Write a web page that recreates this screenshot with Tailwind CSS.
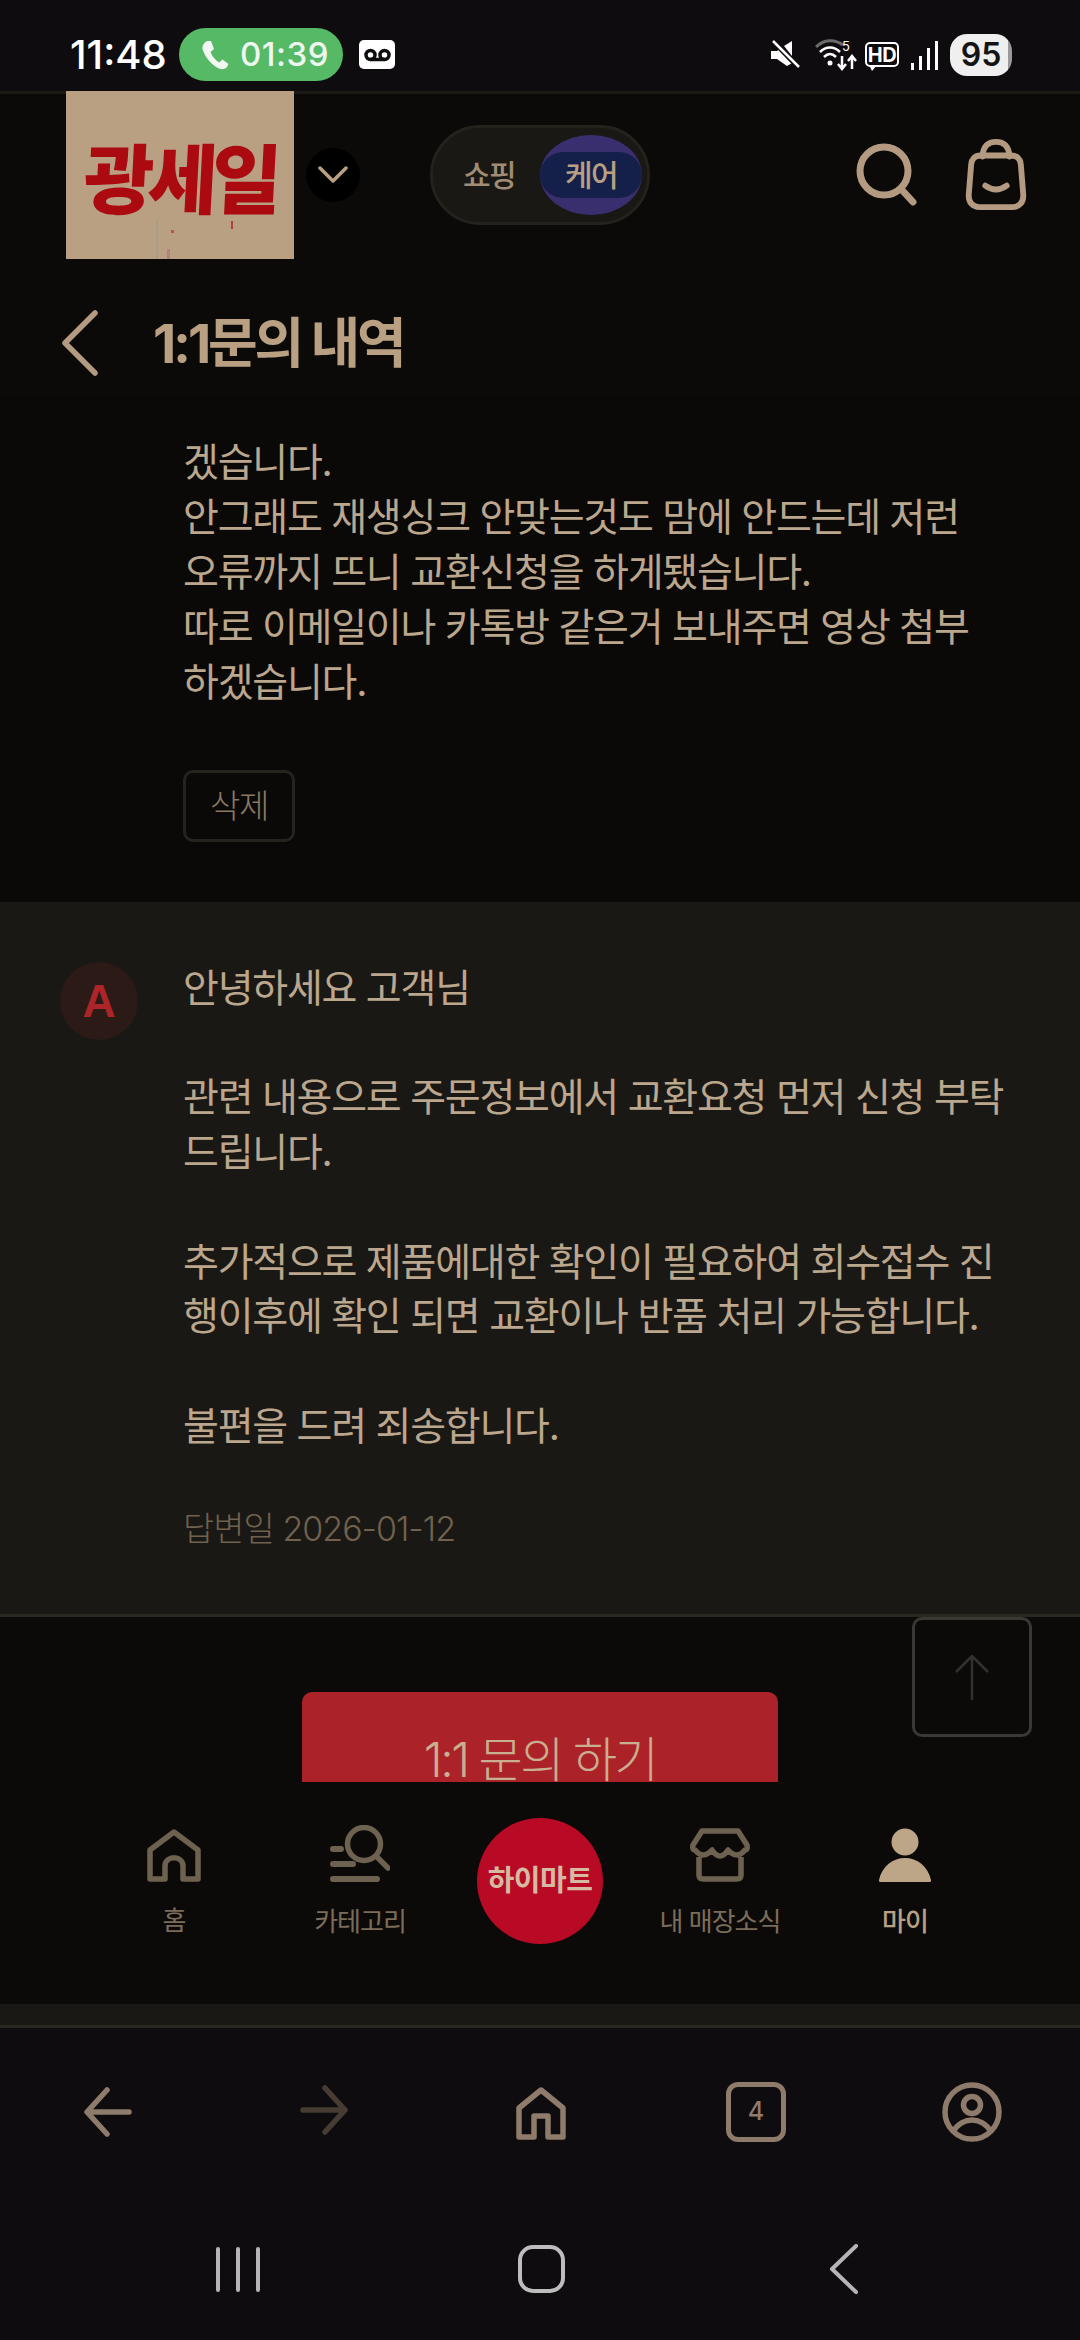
<!DOCTYPE html>
<html lang="ko">
<head>
  <meta charset="utf-8"/>
  <meta name="viewport" content="width=device-width, initial-scale=1"/>
  <title>1:1문의 내역</title>
  <script src="https://cdn.jsdelivr.net/npm/@tailwindcss/browser@4"></script>
</head>
<body class="bg-[#0c0a08] font-['Inter','Noto_Sans_CJK_KR',sans-serif] text-[#bba68e]">
  <div class="relative w-[1080px] h-[2340px] overflow-hidden flex flex-col">

    <!-- Status bar -->
    <div class="h-[94px] shrink-0 bg-[#0e0c0e] border-b-[3px] border-[#1c1a15] flex items-start justify-between pl-[70px] pr-[68px] pt-[28px]">
      <div class="flex items-center h-[53px]">
        <span class="text-[40px] font-medium text-white w-[109px]">11:48</span>
        <div class="w-[164px] h-[53px] rounded-full bg-[#55b966] flex items-center pl-[22px] gap-[11px]">
          <svg width="28" height="30" viewBox="0 0 28 30" fill="#f3f8f3"><path d="M6 1 10 1 13 9 9.500 12C11 16 14 20 18 22.500L21.500 19.500 27.500 24 26 27C24 29.500 20 30 16 27.500 9 23.500 3 15 1.500 9 1 6 3 2.500 6 1Z"/></svg>
          <span class="text-[33px] font-medium text-[#eef7ef] tracking-[0.5px]">01:39</span>
        </div>
        <div class="ml-[16px] w-[36px] h-[29px] rounded-[5px] bg-white flex items-center justify-center">
          <svg width="27" height="14" viewBox="0 0 27 14" fill="none" stroke="#0e0c0e" stroke-width="3.500"><circle cx="6.500" cy="7" r="4.500"/><circle cx="20.500" cy="7" r="4.500"/><path d="M6.500 11.500h14"/></svg>
        </div>
      </div>
      <div class="flex items-center h-[53px]">
        <svg width="30" height="30" viewBox="0 0 30 30" fill="white" class="mr-[15px]"><path d="M1 11h6l4-3 14 14-1 0 0 0L17 26 7 19H1Z"/><path d="M14 6 22 1v15Z"/><path d="M3 1 29 28" stroke="#0e0c0e" stroke-width="5"/><path d="M3 1 29 27" stroke="white" stroke-width="2.500"/></svg>
        <svg width="42" height="32" viewBox="0 0 42 32" fill="none" class="mr-[8px]"><path d="M1 8C9 0 20 0 28 6" stroke="#6b6b6b" stroke-width="3"/><path d="M5 13C11 7 19 7 25 13" stroke="white" stroke-width="2.500"/><path d="M9 18C13 14 17 14 21 18" stroke="white" stroke-width="2.500"/><circle cx="15" cy="24" r="2.500" fill="white"/><path d="M27 17v12M23 25l4 5 4-5M37 30V18M33 22l4-5 4 5" stroke="white" stroke-width="2.500"/><text x="27" y="12" font-size="13" fill="white" font-family="Inter">5</text></svg>
        <div class="relative w-[34px] h-[25px] border-[2px] border-white rounded-[5px] flex items-center justify-center text-[20px] leading-none font-bold tracking-[-0.5px] text-white mr-[12px]">HD<span class="absolute left-[2px] -bottom-[6px] w-0 h-0 border-l-[3px] border-r-[5px] border-t-[6px] border-l-transparent border-r-transparent border-t-white"></span></div>
        <div class="flex items-end gap-[5px] h-[30px] mr-[12px]">
          <div class="w-[3px] h-[7px] bg-white"></div>
          <div class="w-[3px] h-[14px] bg-white"></div>
          <div class="w-[3px] h-[22px] bg-white"></div>
          <div class="w-[3px] h-[29px] bg-white"></div>
        </div>
        <div class="w-[62px] h-[42px] rounded-[17px] bg-[linear-gradient(90deg,#efefef_93%,#9a9a9a_93%)] flex items-center justify-center text-[32px] font-semibold text-[#141414]">95</div>
      </div>
    </div>

    <!-- Site header -->
    <div class="h-[196px] shrink-0 flex items-start pl-[66px]">
      <div class="relative w-[228px] h-[168px] -mt-[3px] bg-[#b9a083] overflow-hidden flex items-center justify-center">
        <span class="mt-[10px] text-[76px] font-black leading-none tracking-[-6px] text-[#ab0a10] -skew-x-3">광세일</span>
        <div class="absolute left-[90px] bottom-0 w-[2px] h-[40px] bg-[#a89d85]"></div>
        <div class="absolute left-[105px] bottom-[26px] w-[3px] h-[3px] bg-[#c05050]"></div>
        <div class="absolute left-[101px] bottom-0 w-[3px] h-[10px] bg-[#b58080]"></div>
        <div class="absolute left-[165px] bottom-[30px] w-[2px] h-[8px] bg-[#b04040]"></div>
      </div>
      <div class="ml-[12px] mt-[54px] w-[54px] h-[54px] rounded-full bg-black flex items-center justify-center">
        <svg width="30" height="18" viewBox="0 0 30 18" fill="none" stroke="#b9a083" stroke-width="3.500" stroke-linecap="round" stroke-linejoin="round"><path d="M2 2l13 13L28 2"/></svg>
      </div>
      <div class="ml-[70px] mt-[31px] w-[220px] h-[100px] rounded-full bg-[#1a1814] border-[3px] border-[#25221d] flex items-center pl-[30px]">
        <span class="text-[30px] font-medium text-[#a08c74] tracking-[-1.500px] w-[77px]">쇼핑</span>
        <div class="relative w-[102px] h-[80px] rounded-[50%] bg-[#3a2f6e] flex items-center">
          <div class="w-full h-[46px] rounded-full bg-[#14204a] flex items-center justify-center text-[30px] font-medium text-[#b9a083] tracking-[-1.500px]">케어</div>
        </div>
      </div>
      <div class="ml-auto mr-[52px] mt-[45px] flex items-start gap-[47px]">
        <svg width="62" height="64" viewBox="0 0 62 64" fill="none" stroke="#b39a80" stroke-width="7" stroke-linecap="round" class="mt-[4px]"><circle cx="29" cy="28" r="24"/><path d="M47 47l11 12"/></svg>
        <svg width="64" height="72" viewBox="0 0 62 74" fill="none" stroke="#b39a80" stroke-width="6" stroke-linecap="round" stroke-linejoin="round"><path d="M17 18C18 6 24 3 31 3s13 3 14 15"/><path d="M15 17h32c6 0 9 4 9.500 9L59 57c.5 8-4 13-11 13H14C7 70 2.500 65 3 57l2.500-31C6 21 9 17 15 17Z"/><path d="M20 48c7 5 15 5 22 0"/></svg>
      </div>
    </div>

    <!-- Page title -->
    <div class="h-[106px] shrink-0 flex items-center pl-[62px]">
      <svg width="38" height="66" viewBox="0 0 38 66" fill="none" stroke="#b39a80" stroke-width="5.500" stroke-linecap="round" stroke-linejoin="round"><path d="M33 3 3 33l30 30"/></svg>
      <h1 class="ml-[53px] text-[54px] font-bold tracking-[-3.200px] text-[#b9a083]">1:1문의 내역</h1>
    </div>

    <!-- Question -->
    <div class="h-[506px] shrink-0 bg-[#0a0907] pl-[183px] pt-[38px] text-[39px] font-normal leading-[55px] tracking-[-1.250px]">
      <p>겠습니다.<br/>안그래도 재생싱크 안맞는것도 맘에 안드는데 저런<br/>오류까지 뜨니 교환신청을 하게됐습니다.<br/>따로 이메일이나 카톡방 같은거 보내주면 영상 첨부<br/>하겠습니다.</p>
      <button class="mt-[61px] w-[112px] h-[72px] rounded-[10px] border-[3px] border-[#26221d] text-[33px] font-light text-[#8b7963]">삭제</button>
    </div>

    <!-- Answer -->
    <div class="h-[715px] shrink-0 bg-[#1a1814] border-b-[3px] border-[#2a2720] flex pl-[60px] pt-[58px]">
      <div class="w-[78px] h-[78px] mt-[2px] shrink-0 rounded-full bg-[#2c1a17] flex items-center justify-center text-[46px] font-bold text-[#ab2529]" style="font-family:'Liberation Sans',sans-serif">A</div>
      <div class="ml-[45px] pt-[1px] text-[39px] font-normal leading-[54.700px] tracking-[-1.250px]">
        <p>안녕하세요 고객님<br/><br/>관련 내용으로 주문정보에서 교환요청 먼저 신청 부탁<br/>드립니다.<br/><br/>추가적으로 제품에대한 확인이 필요하여 회수접수 진<br/>행이후에 확인 되면 교환이나 반품 처리 가능합니다.<br/><br/>불편을 드려 죄송합니다.</p>
        <p class="mt-[49px] text-[34px] font-light text-[#70624f] tracking-[-1px]">답변일 2026-01-12</p>
      </div>
    </div>

    <!-- CTA, clipped by the bottom nav -->
    <div class="h-[165px] shrink-0 overflow-hidden pt-[75px] flex justify-center">
      <div class="w-[476px] h-[130px] rounded-t-[10px] bg-[#ac2229] flex justify-center pt-[44px] text-[48px] font-light tracking-[-2.500px] leading-none text-[#c9ae90]">1:1 문의 하기</div>
    </div>

    <!-- Bottom nav -->
    <div class="h-[222px] shrink-0 bg-[#0c0a08] grid grid-cols-[88px_172px_200px_160px_200px_170px] pt-[31px]">
      <div></div>
      <a class="flex flex-col items-center text-[#7c6d5a]">
        <svg width="54" height="53" viewBox="0 0 54 53" fill="none" stroke="#6d6150" stroke-width="5.500" stroke-linejoin="round" class="mt-[16px]"><path d="M3 50V21L27 3l24 18v29H36V37c0-11-18-11-18 0v13Z"/></svg>
        <span class="mt-[19px] text-[26px] font-normal tracking-[-1px]">홈</span>
      </a>
      <a class="flex flex-col items-center text-[#7c6d5a]">
        <svg width="60" height="57" viewBox="0 0 60 57" fill="none" stroke="#6d6150" stroke-width="5.500" stroke-linecap="round" class="mt-[12px]"><circle cx="34" cy="19" r="16.500"/><path d="M46 31l12 12"/><path d="M3 24h8M3 39h20M3 54h44" stroke-width="6"/></svg>
        <span class="mt-[20px] text-[26px] font-normal tracking-[-1px]">카테고리</span>
      </a>
      <div class="flex justify-center">
        <div class="w-[126px] h-[126px] mt-[5px] rounded-full bg-[#b80a24] flex items-center justify-center text-[29px] font-semibold tracking-[-0.5px] text-[#d6b9a3]">하이마트</div>
      </div>
      <a class="flex flex-col items-center text-[#7c6d5a]">
        <svg width="60" height="54" viewBox="0 0 60 54" fill="none" stroke="#6d6150" stroke-width="5.500" stroke-linejoin="round" class="mt-[15px]"><path d="M12 3H48L57 17Q58 22 55 22Q47 32 38 22Q30 34 22 22Q13 32 5 22Q2 22 3 17Z"/><path d="M9 29V47Q9 51 13 51H47Q51 51 51 47V29"/></svg>
        <span class="mt-[20px] text-[26px] font-normal tracking-[-1px]">내 매장소식</span>
      </a>
      <a class="flex flex-col items-center text-[#b9a083]">
        <svg width="54" height="54" viewBox="0 0 54 54" fill="#bda587" class="mt-[15px]"><circle cx="27" cy="14" r="13.500"/><path d="M1 52C4 38 15 30 27 30s23 8 26 22q.5 2-2 2H3q-2.500 0-2-2Z"/></svg>
        <span class="mt-[20px] text-[26px] font-medium tracking-[-1px]">마이</span>
      </a>
    </div>

    <!-- Browser toolbar -->
    <div class="h-[24px] shrink-0 bg-[#1a1814] border-b-[3px] border-[#2a2720]"></div>
    <div class="flex-1 bg-[#0e0c0e] flex flex-col">
      <div class="h-[142px] flex items-start justify-between pl-[84px] pr-[78px] pt-[54px]">
        <svg width="48" height="50" viewBox="0 0 48 50" fill="none" stroke="#8f7b6b" stroke-width="5.500" stroke-linecap="round" stroke-linejoin="round" class="mt-[5px]"><path d="M23 3 3 25l20 22M4 25h41"/></svg>
        <svg width="48" height="50" viewBox="0 0 48 50" fill="none" stroke="#463c34" stroke-width="5.500" stroke-linecap="round" stroke-linejoin="round" class="mt-[3px] ml-[12px]"><path d="M25 3l20 22-20 22M3 25h41"/></svg>
        <svg width="50" height="54" viewBox="0 0 50 54" fill="none" stroke="#8f7b6b" stroke-width="5.500" stroke-linejoin="round" class="ml-[12px] mt-[5px]"><path d="M3 50V21L25 3l22 18v29H32V29H18v21Z"/></svg>
        <div class="w-[60px] h-[60px] ml-[4px] rounded-[12px] border-[5px] border-[#8f7b6b] flex items-center justify-center text-[25px] font-medium text-[#8f7b6b]">4</div>
        <svg width="60" height="60" viewBox="0 0 60 60" fill="none" stroke="#8f7b6b" stroke-width="5.500"><circle cx="30" cy="30" r="27"/><circle cx="30" cy="23" r="8.500"/><path d="M11 50c5-9 13-12 19-12s14 3 19 12"/></svg>
      </div>
      <div class="flex-1 relative">
        <div class="absolute left-[216px] top-[77px] flex gap-[16px]">
          <div class="w-[4px] h-[45px] rounded-full bg-[#b5b5b5]"></div>
          <div class="w-[4px] h-[45px] rounded-full bg-[#b5b5b5]"></div>
          <div class="w-[4px] h-[45px] rounded-full bg-[#b5b5b5]"></div>
        </div>
        <div class="absolute left-[518px] top-[75px] w-[47px] h-[48px] rounded-[15px] border-[4px] border-[#bdbdbd]"></div>
        <svg width="30" height="50" viewBox="0 0 30 50" fill="none" stroke="#b5b5b5" stroke-width="4" stroke-linecap="round" stroke-linejoin="round" class="absolute left-[829px] top-[74px]"><path d="M27 2 3 25l24 23"/></svg>
      </div>
    </div>

    <!-- Scroll-to-top button, floats over the page -->
    <div class="absolute left-[912px] top-[1617px] w-[120px] h-[120px] rounded-[10px] border-[3px] border-[#3a3834] flex items-center justify-center">
      <svg width="36" height="46" viewBox="0 0 36 46" fill="none" stroke="#33312d" stroke-width="2.500"><path d="M18 46V2M2 18 18 2l16 16"/></svg>
    </div>
  </div>
</body>
</html>
